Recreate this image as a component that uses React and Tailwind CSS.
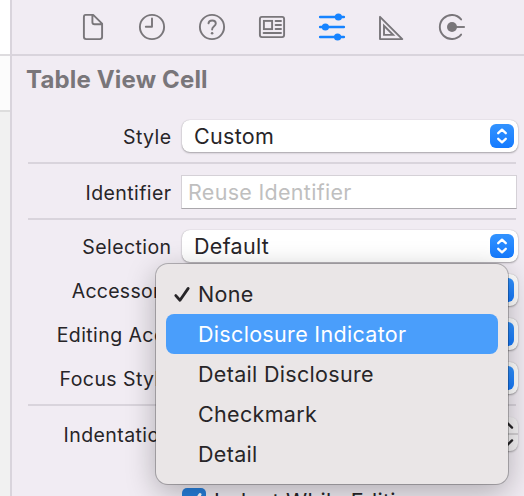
import React from "react";

function ToolIcon({ children, active }) {
  return (
    <svg
      width="30"
      height="30"
      viewBox="0 0 30 30"
      fill="none"
      stroke="currentColor"
      strokeWidth="1.9"
      className={active ? "shrink-0 text-[#1683ff]" : "shrink-0 text-[#79767a]"}
    >
      {children}
    </svg>
  );
}

function Toolbar() {
  return (
    <div className="flex h-14 shrink-0 items-start gap-[30px] border-b-2 border-[#d9d4dc] pl-[65px] pt-3">
      <ToolIcon>
        <path d="M8.6 2.9H16.2L25.1 11.6V24.8Q25.1 27.1 22.8 27.1H9.2Q6.9 27.1 6.9 24.8V5.2Q6.9 2.9 8.6 2.9ZM15.4 3V10.2Q15.4 12.3 17.5 12.3H25" strokeLinejoin="round" />
      </ToolIcon>
      <ToolIcon>
        <circle cx="15" cy="15" r="12.1" />
        <path d="M15 6.4V14.8H8.8" strokeLinecap="round" strokeLinejoin="round" />
      </ToolIcon>
      <ToolIcon>
        <circle cx="15" cy="15" r="12.1" />
        <path d="M11.5 11.4C11.8 7.4 18.8 7.5 18.8 11.5C18.8 14.4 15.1 14.2 15.1 17.6" strokeWidth="1.9" strokeLinecap="round" />
        <circle cx="15.1" cy="21.2" r="1.3" fill="currentColor" stroke="none" />
      </ToolIcon>
      <ToolIcon>
        <rect x="2.9" y="4.9" width="24.2" height="20.2" rx="2" />
        <rect x="6.9" y="8.9" width="8.2" height="8.2" />
        <path d="M18.6 9H24M18.6 13H24M18.6 17H24M6.6 21H24" strokeLinecap="round" />
      </ToolIcon>
      <ToolIcon active>
        <path d="M3.2 5H26.8M3.2 15H26.8M3.2 25H26.8" strokeWidth="2.6" strokeLinecap="round" />
        <circle cx="21.4" cy="5" r="3.6" fill="currentColor" stroke="none" />
        <circle cx="8.4" cy="15" r="3.6" fill="currentColor" stroke="none" />
        <circle cx="20.6" cy="25" r="3.6" fill="currentColor" stroke="none" />
      </ToolIcon>
      <ToolIcon>
        <path d="M3 4.8V27.1H25.3Z" strokeLinejoin="round" />
        <path d="M7 13.8V22.9H16.1Z" />
      </ToolIcon>
      <ToolIcon>
        <path d="M24.1 7.4A12 12 0 1 0 24.1 22.6" strokeLinecap="round" />
        <circle cx="15" cy="15" r="5" fill="currentColor" stroke="none" />
        <path d="M15 15H27.8" strokeWidth="1.9" />
      </ToolIcon>
    </div>
  );
}

function Label({ children, inset }) {
  return (
    <div
      className={`w-[144px] shrink-0 whitespace-nowrap pt-[4px] text-right text-[19.5px] text-[#272528] ${
        inset ? "pr-0 tracking-[0.25px]" : "pr-[0.5px] tracking-[0.42px]"
      }`}
    >
      {children}
    </div>
  );
}

function PopUpButton({ value }) {
  return (
    <div className="ml-[10px] flex h-8 w-[336px] shrink-0 items-center justify-between rounded-[8px] bg-white pl-3 pr-1 shadow-[0_1px_2px_rgba(0,0,0,0.3),0_0_1px_rgba(0,0,0,0.25)]">
      <span className="pt-[2px] text-[21.5px] tracking-[0.3px]">{value}</span>
      <span className="flex size-6 items-center justify-center rounded-[6px] bg-linear-to-b from-[#3293ff] to-[#147aff]">
        <svg width="24" height="24" viewBox="0 0 24 24" fill="none" stroke="white" strokeWidth="2.3" strokeLinecap="round" strokeLinejoin="round">
          <path d="M8.2 9.2L12 5.7L15.8 9.2M8.2 14.8L12 18.3L15.8 14.8" />
        </svg>
      </span>
    </div>
  );
}

function Row({ label, value, inset }) {
  return (
    <div className="flex h-8 items-center">
      <Label inset={inset}>{label}</Label>
      <PopUpButton value={value} />
    </div>
  );
}

function Divider() {
  return <div className="h-0.5 w-[488px] shrink-0 bg-[#d9d4dc]" />;
}

function Stepper() {
  return (
    <div className="flex h-[34px] w-[24px] flex-col rounded-[8px] bg-[#f4f2f4] shadow-[0_1px_2px_rgba(0,0,0,0.3)]">
      <svg width="24" height="34" viewBox="0 0 24 34" fill="none" stroke="#272528" strokeWidth="2.4" strokeLinecap="round">
        <path d="M0 17H24" stroke="#c8c4c9" strokeWidth="1.6" />
        <path d="M9 10.6L13.5 6.2L18 10.6M9 23.4L13.5 27.8L18 23.4" />
      </svg>
    </div>
  );
}

const options = ["None", "Disclosure Indicator", "Detail Disclosure", "Checkmark", "Detail"];

function Menu() {
  return (
    <div className="absolute left-[156px] top-[264px] h-[220px] w-[352px] rounded-[12px] bg-[#eae6e7] p-[10px] shadow-[0_0_0_1px_rgba(0,0,0,0.24),0_8px_30px_rgba(0,0,0,0.28)]">
      {options.map((option, index) => (
        <div
          key={option}
          className={
            index === 1
              ? "flex h-10 items-center rounded-[8px] bg-[#4a9efb] text-white"
              : "flex h-10 items-center text-[#272528]"
          }
        >
          <span className="flex w-8 justify-center">
            {index === 0 && (
              <svg width="18" height="18" viewBox="0 0 18 18" fill="none" stroke="currentColor" strokeWidth="2.8" strokeLinecap="round" strokeLinejoin="round">
                <path d="M2.8 10.6L7 15.3L15.2 3.4" />
              </svg>
            )}
          </span>
          <span className="pt-[2px] text-[21.5px] tracking-[0.32px]">{option}</span>
        </div>
      ))}
    </div>
  );
}

export default function App() {
  return (
    <div className="relative flex h-[496px] w-[524px] overflow-hidden bg-[#f1ecf3] font-['Inter','Liberation_Sans',sans-serif] leading-none text-[#272528]">
      <div className="flex w-[10px] shrink-0 flex-col bg-[#f1f1f1]">
        <div className="h-14 border-b-2 border-[#dedcdf] bg-white" />
        <div className="h-14 border-b-2 border-[#dddddd] bg-[#fcfcfc]" />
      </div>
      <div className="flex w-[514px] shrink-0 flex-col border-l-2 border-[#d9d4dc]">
        <Toolbar />
        <div className="flex flex-col pl-4">
          <h1 className="-ml-[2px] flex h-[48px] items-center text-[24px] font-bold tracking-[0.16px] text-[#79767a]">Table View Cell</h1>
          <div className="mt-4">
            <Row label="Style" value="Custom" />
          </div>
          <div className="mt-[10px]">
            <Divider />
          </div>
          <div className="mt-[11px] flex h-[34px] items-center">
            <Label>Identifier</Label>
            <div className="ml-[9px] flex h-[34px] w-[336px] items-center border border-b-[#aaa7ac] border-l-[#d5d1d7] border-r-[#d5d1d7] border-t-[#d5d1d7] bg-white pl-[6px] pt-[2px] text-[21.5px] tracking-[0.3px] text-[#bfbfbf]">
              Reuse Identifier
            </div>
          </div>
          <div className="mt-[9px]">
            <Divider />
          </div>
          <div className="mt-[10px] flex flex-col gap-3">
            <Row label="Selection" value="Default" />
            <Row label="Accessory" value="" inset />
            <Row label="Editing Acc." value="" />
            <Row label="Focus Style" value="" />
          </div>
          <div className="mt-[10px]">
            <Divider />
          </div>
          <div className="mt-[11px] flex h-[34px] items-center">
            <Label>Indentation</Label>
            <div className="ml-[322px]">
              <Stepper />
            </div>
          </div>
          <div className="ml-[154px] mt-[37px] flex h-6 items-center gap-2">
            <svg width="24" height="24" viewBox="0 0 24 24" fill="none" className="shrink-0 rounded-[5px] bg-[#267fdc]">
              <path d="M6 13L10.5 18L18 6.5" stroke="white" strokeWidth="3" strokeLinecap="round" />
            </svg>
            <span className="whitespace-nowrap pt-[3px] text-[21.5px] tracking-[0.3px]">Indent While Editing</span>
          </div>
        </div>
      </div>
      <Menu />
    </div>
  );
}
